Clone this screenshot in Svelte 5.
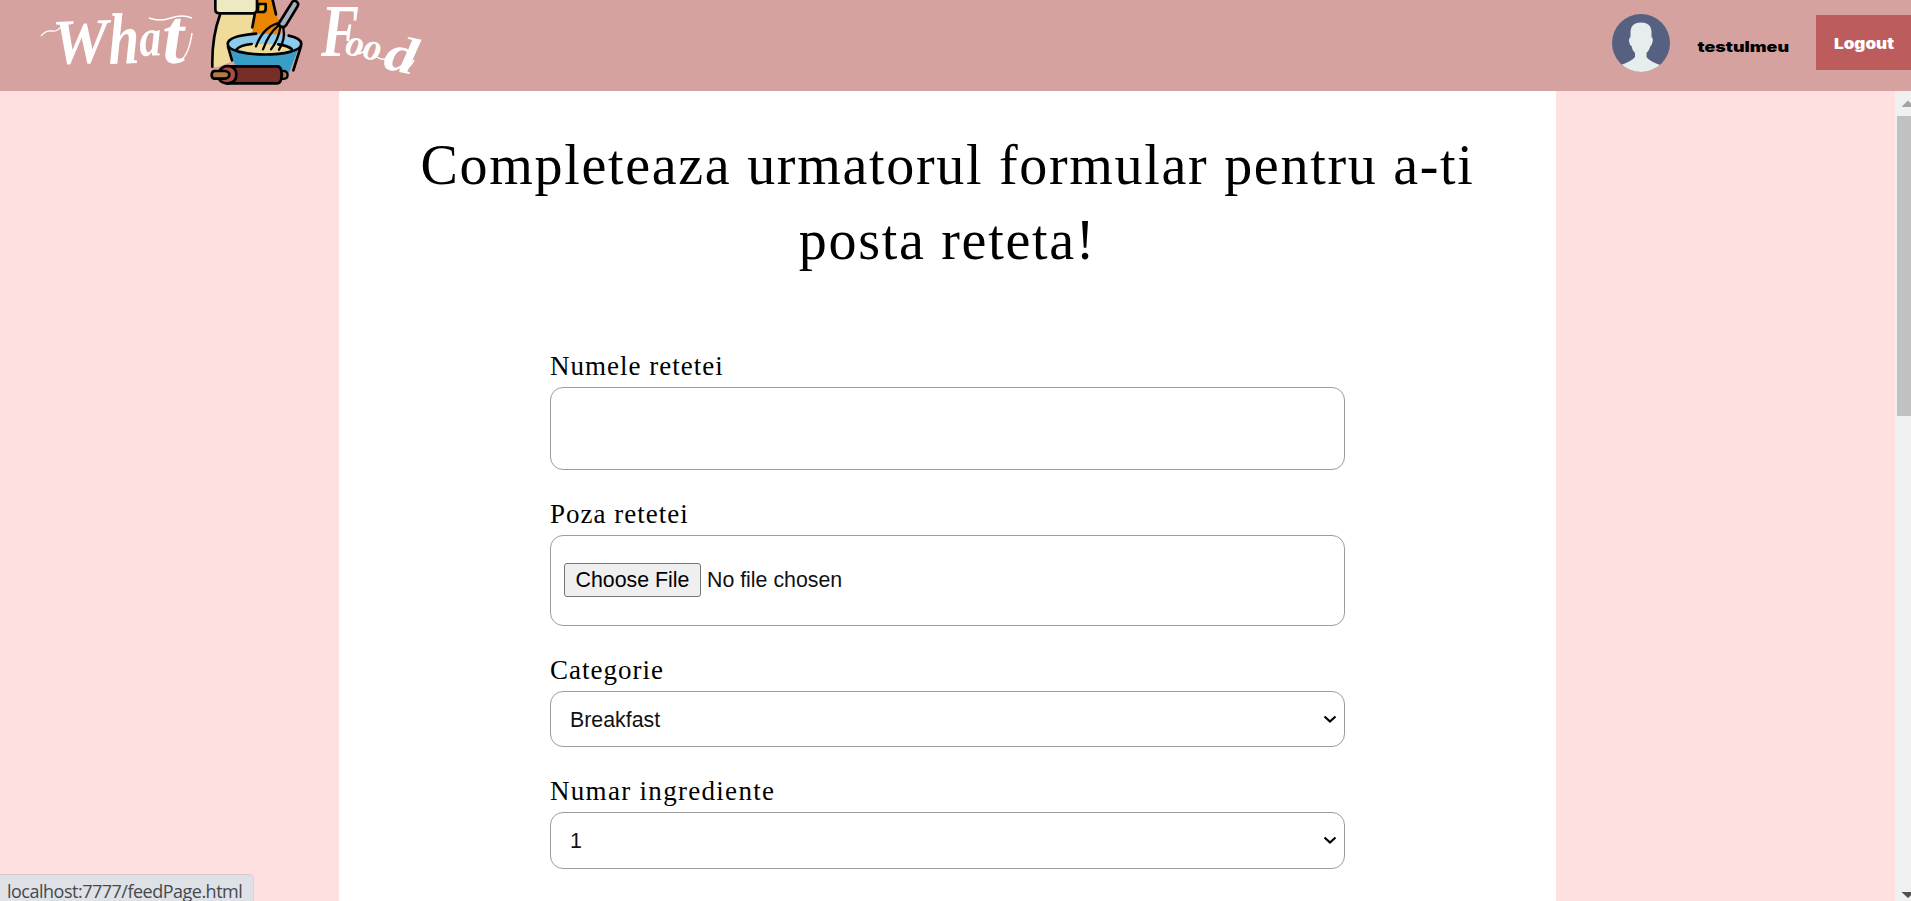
<script>
  const categories = ['Breakfast', 'Lunch', 'Dinner', 'Dessert'];
  const counts = [1, 2, 3, 4, 5];
</script>

<div class="page">
  <header>
    <svg class="logo" width="450" height="91" viewBox="0 0 450 91">
      <g class="script">
        <path d="M41 36Q46 30 52 31T63 24" fill="none" stroke="#fff" stroke-width="1.3" />
        <g transform="rotate(-2 55 62)">
          <text class="heavy" x="53" y="64" font-size="64" textLength="56" lengthAdjust="spacingAndGlyphs">W</text>
          <text class="heavy" x="109" y="66" font-size="73" textLength="31" lengthAdjust="spacingAndGlyphs">h</text>
          <text class="heavy" x="140" y="59" font-size="54" textLength="22" lengthAdjust="spacingAndGlyphs">a</text>
          <text class="heavy" x="163" y="67" font-size="78" textLength="22" lengthAdjust="spacingAndGlyphs">t</text>
        </g>
        <path d="M149 18Q160 22 171 18T192 18M180 61Q189 55 192 33" fill="none" stroke="#fff" stroke-width="1.5" />
        <text class="heavy" x="321" y="56" font-size="74" textLength="38" lengthAdjust="spacingAndGlyphs">F</text>
        <g transform="rotate(12 344 54)">
          <text class="heavy" x="344" y="54" font-size="39" textLength="18" lengthAdjust="spacingAndGlyphs">o</text>
          <text class="heavy" x="362" y="54" font-size="39" textLength="18" lengthAdjust="spacingAndGlyphs">o</text>
          <text class="heavy" x="384" y="60" font-size="52" textLength="32" lengthAdjust="spacingAndGlyphs">d</text>
        </g>
        <path d="M359 54Q363 51 368 51M377 57Q382 61 388 58M400 71Q408 71 414 60" fill="none" stroke="#fff" stroke-width="1.6" />
      </g>
      <svg x="195" y="0" width="120" height="95" viewBox="0 0 360 285">
        <g stroke="#000" stroke-width="8" stroke-linecap="round" stroke-linejoin="round">
          <path d="M186 0H232L243 44L262 78L250 110L170 110L172 84L186 36Z" fill="#ea8600" stroke="none" />
          <path d="M72 42H182L171 100L100 118L112 184L70 200L52 202Q50 105 72 42Z" fill="#f0dc9a" stroke="none" />
          <path d="M75 44Q50 112 52 200M179 44L172 82M232 -4L243 43" fill="none" />
          <path d="M190 12H212V26Q212 36 202 36H188Z" fill="#f3b51b" />
          <path d="M61 -5V28Q61 40 73 40H174Q186 40 186 28V-5Z" fill="#ede9c3" />
          <path d="M98 126L118 190L140 218H282L318 126Z" fill="#379fc7" stroke="none" />
          <ellipse cx="208" cy="132" rx="109" ry="31" fill="#8ccbea" stroke="none" />
          <path d="M125 147Q142 130 208 132T292 149Q208 174 125 147Z" fill="#f0dc9a" stroke="none" />
          <path d="M183 101Q98 108 98 132C100 174 318 174 319 132Q319 115 281 107M99 140L111 181M318 138L295 211M125 148Q136 135 170 132M250 133Q279 137 290 147" fill="none" />
          <path d="M247 70Q203 84 183 139M250 77Q222 99 204 148M256 82Q250 119 228 148M265 84Q272 118 252 149M247 72L266 84" fill="none" stroke-width="7" />
          <path d="M256 63L288 12Q296 -4 306 6Q313 11 306 22L273 76Q267 85 256 78Q247 73 256 63Z" fill="#a5afbd" />
          <path d="M95 199H247Q260 199 260 224T247 250H95Z" fill="#762e26" />
          <path d="M72 214Q82 198 99 198Q124 201 124 224T99 250Q80 251 71 236Z" fill="#a54f42" />
          <path d="M57 213H90Q103 215 103 224T90 236H57Q50 234 50 225T57 213Z" fill="#b17b43" />
          <path d="M260 213Q278 211 278 225T259 236Q263 224 260 213Z" fill="#b17b43" stroke-width="7" />
        </g>
      </svg>
    </svg>

    <div class="account">
      <svg class="avatar" width="58" height="58" viewBox="0 0 58 58">
        <defs><clipPath id="round"><circle cx="29" cy="29" r="29" /></clipPath></defs>
        <g clip-path="url(#round)">
          <rect width="58" height="58" fill="#566181" />
          <path d="M18.5 17Q19 8.500 29 8.500T39.500 17V23Q41.500 24 40.500 28Q40 31 38.500 32Q37.500 36 34.500 39V43Q37 47 48 51V60H9V51Q20 47 23 43V39Q20 36 19.500 32Q17.500 31 17.200 28Q16.500 24 18.500 23Z" fill="#e7eded" />
        </g>
      </svg>
      <svg class="user" width="93" height="30" viewBox="0 0 93 30">
        <text x="0.500" y="21.500" textLength="91.500" lengthAdjust="spacingAndGlyphs">testulmeu</text>
      </svg>
      <button class="logout" aria-label="Logout">
        <svg width="61" height="30" viewBox="0 0 61 30">
          <text x="0" y="21" textLength="60" lengthAdjust="spacingAndGlyphs">Logout</text>
        </svg>
      </button>
    </div>
  </header>

  <div class="body">
    <main>
      <h1>Completeaza urmatorul formular pentru a-ti<br />posta reteta!</h1>
      <form>
        <label for="name">Numele retetei</label>
        <input id="name" class="field name" type="text" />
        <label for="photo">Poza retetei</label>
        <div class="field file">
          <button type="button" id="photo">Choose File</button>
          <span>No file chosen</span>
        </div>
        <label for="category">Categorie</label>
        <div class="pick">
          <select id="category" class="field">
            {#each categories as c}<option>{c}</option>{/each}
          </select>
          <svg class="chev" width="14" height="9" viewBox="0 0 14 9"><path d="M1.500 1.500L7 6.500L12.500 1.500" /></svg>
        </div>
        <label for="count" class="wide">Numar ingrediente</label>
        <div class="pick last">
          <select id="count" class="field">
            {#each counts as n}<option>{n}</option>{/each}
          </select>
          <svg class="chev" width="14" height="9" viewBox="0 0 14 9"><path d="M1.500 1.500L7 6.500L12.500 1.500" /></svg>
        </div>
      </form>
    </main>
    <div class="scrollbar">
      <svg width="16" height="25" viewBox="0 0 16 25"><path d="M6.500 16L13 9.500L19.500 16Z" fill="#a3a3a3" /></svg>
      <div class="thumb"></div>
      <svg class="down" width="16" height="25" viewBox="0 0 16 25"><path d="M6.500 16L13 22L19.500 16Z" fill="#505050" /></svg>
    </div>
  </div>
  <div class="status">localhost:7777/feedPage.html</div>
</div>

<style>
  :global(body) { margin: 0; overflow: hidden; }
  * { box-sizing: border-box; }
  .page { position: relative; width: 1911px; height: 901px; overflow: hidden; display: flex; flex-direction: column; background: #fee0e1; }
  header { height: 91px; flex: none; display: flex; justify-content: space-between; background: #d5a2a0; }
  .logo { display: block; overflow: hidden; }
  .script text { font-family: "Liberation Serif", serif; font-style: italic; fill: #fff; }
  .script .heavy { font-weight: 700; }
  .account { display: flex; align-items: center; height: 85px; }
  .avatar { margin-right: 27px; }
  .user { margin-right: 26px; margin-top: 4px; }
  .user text, .logout text { font: 900 15px Inter, sans-serif; }
  .user text { font-size: 14px; }
  .logout { width: 95px; height: 55px; padding: 0 0 0 18px; border: 0; background: #bd5c5c; display: flex; align-items: center; }
  .logout text { fill: #fff; }
  .body { flex: 1; display: flex; min-height: 0; }
  main { width: 1217px; margin-left: 339px; margin-right: 339px; flex: none; background: #fff; overflow: hidden; }
  h1 { margin: 37px 0 0; text-align: center; font: 400 56px/75px "Liberation Serif", serif; letter-spacing: 1.7px; white-space: nowrap; color: #000; }
  form { width: 795px; margin: 70px auto 0 211px; display: flex; flex-direction: column; }
  label { height: 39px; font: 27px/37px "Liberation Serif", serif; letter-spacing: 1px; }
  .wide { letter-spacing: 1.3px; }
  .field { width: 100%; border: 1px solid #9c9c9c; border-radius: 13px; background: #fff; font: 21.33px "Liberation Sans", sans-serif; color: #111; }
  .name { height: 83px; margin-bottom: 26px; padding: 0 20px; }
  .file { height: 91px; margin-bottom: 26px; padding: 0 13px 2px; display: flex; align-items: center; gap: 6px; }
  .file button { width: 137px; height: 34px; padding: 1px 0 0; border: 1px solid #767676; border-radius: 3px; background: #efefef; font: inherit; color: #000; white-space: nowrap; }
  .file span { padding-top: 1px; }
  .pick { position: relative; height: 56px; margin-bottom: 26px; }
  .pick.last { height: 57px; }
  select.field { height: 100%; appearance: none; padding: 1px 19px 0; }
  .chev { position: absolute; right: 8px; top: 24px; fill: none; stroke: #000; stroke-width: 2.2; }
  .scrollbar { width: 17px; display: flex; flex-direction: column; background: #f0f0f0; }
  .thumb { height: 300px; margin-left: 2px; background: #c1c1c1; }
  .down { margin-top: auto; }
  .status { position: absolute; left: 0; bottom: 0; width: 254px; height: 27px; padding-left: 7px; border-top: 1px solid #d9c9cd; border-right: 1px solid #d9d3d8; border-top-right-radius: 5px; background: #dee1e6; color: #46494d; font: 18px/33px "Open Sans", sans-serif; letter-spacing: -0.5px; white-space: nowrap; }
</style>
